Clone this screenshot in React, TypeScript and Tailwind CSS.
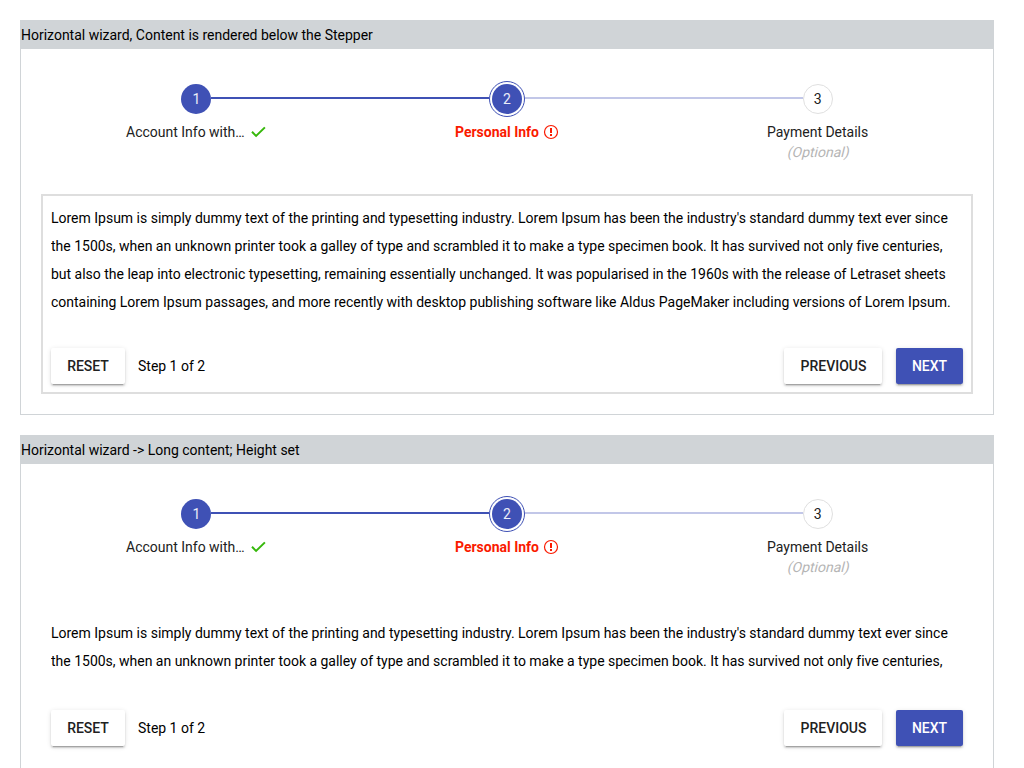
import type { ReactNode } from "react";

const LOREM = [
  "Lorem Ipsum is simply dummy text of the printing and typesetting industry. Lorem Ipsum has been the industry's standard dummy text ever since",
  "the 1500s, when an unknown printer took a galley of type and scrambled it to make a type specimen book. It has survived not only five centuries,",
  "but also the leap into electronic typesetting, remaining essentially unchanged. It was popularised in the 1960s with the release of Letraset sheets",
  "containing Lorem Ipsum passages, and more recently with desktop publishing software like Aldus PageMaker including versions of Lorem Ipsum.",
];

function CheckIcon() {
  return (
    <svg className="ml-[5px] mr-px h-4 w-4 shrink-0" viewBox="0 0 16 16" fill="none" stroke="#36b80b" strokeWidth="2">
      <path d="M2 7.8 6.1 11.9 14.9 3.4" />
    </svg>
  );
}

function ErrorIcon() {
  return (
    <svg className="ml-1 h-4 w-4 shrink-0" viewBox="0 0 16 16" fill="none" stroke="#fa1a00">
      <circle cx="8" cy="8" r="6.5" strokeWidth="1.2" />
      <path d="M8 4v5M8 10v2" strokeWidth="2" />
    </svg>
  );
}

function Step({ circle, before, after, children }: { circle: ReactNode; before: string; after: string; children: ReactNode }) {
  return (
    <li className="flex flex-1 flex-col items-center">
      <div className="flex h-[36px] w-full items-center">
        <div className={`mb-[2px] h-[2px] flex-1 ${before}`} />
        {circle}
        <div className={`mb-[2px] h-[2px] flex-1 ${after}`} />
      </div>
      {children}
    </li>
  );
}

function Stepper() {
  return (
    <ol className="flex h-[113px] text-[#212121]">
      <Step
        before="bg-transparent"
        after="bg-[#3f51b5]"
        circle={<span className="flex size-[30px] items-center justify-center rounded-full bg-[#3f51b5] text-white/90">1</span>}
      >
        <div className="mt-[5px] flex h-5 items-center leading-5">
          <span>Account Info with…</span>
          <CheckIcon />
        </div>
      </Step>
      <Step
        before="bg-[#3f51b5]"
        after="bg-[#c2c7e8]"
        circle={
          <span className="flex size-[36px] items-center justify-center rounded-full border border-[#3f51b5]">
            <span className="flex size-[30px] items-center justify-center rounded-full bg-[#3f51b5] text-white/90">2</span>
          </span>
        }
      >
        <div className="mt-[5px] flex h-5 items-center font-bold leading-5 text-[#fa1a00]">
          <span>Personal Info</span>
          <ErrorIcon />
        </div>
      </Step>
      <Step
        before="bg-[#c2c7e8]"
        after="bg-transparent"
        circle={<span className="flex size-[30px] items-center justify-center rounded-full border border-[#e0e0e0]">3</span>}
      >
        <div className="mt-[5px] leading-5">Payment Details</div>
        <div className="ml-0.5 -skew-x-[14deg] leading-5 text-[#b5b5b5]">(Optional)</div>
      </Step>
    </ol>
  );
}

function Button({ primary, className, children }: { primary?: boolean; className: string; children: ReactNode }) {
  return (
    <button
      className={`h-9 rounded-[2px] text-center font-medium shadow-[0_3px_1px_-2px_rgba(0,0,0,0.2),0_2px_2px_0_rgba(0,0,0,0.14),0_1px_5px_0_rgba(0,0,0,0.12)] ${primary ? "bg-[#3f51b5] text-white" : "bg-white text-[#212121]"} ${className}`}
    >
      {children}
    </button>
  );
}

function Wizard({ title, lines, framed }: { title: string; lines: string[]; framed?: boolean }) {
  return (
    <section className="shrink-0 border border-[#d0d4d7]">
      <h2 className="h-7 bg-[#d0d4d7] leading-7">{title}</h2>
      <div className="px-5 pb-5 pt-8">
        <Stepper />
        <div className={`border-2 p-2 ${framed ? "border-[#dedede]" : "border-transparent"}`}>
          <div className={`overflow-hidden whitespace-nowrap leading-7 ${framed ? "mb-8" : "mb-[35px]"}`}>
            {lines.map((line) => (
              <p key={line}>{line}</p>
            ))}
          </div>
          <div className="flex items-center">
            <Button className="w-[74px]">RESET</Button>
            <span className="ml-[13px]">Step 1 of 2</span>
            <Button className="ml-auto w-[98px] pl-px">PREVIOUS</Button>
            <Button primary className="ml-3.5 w-[67px]">
              NEXT
            </Button>
          </div>
        </div>
      </div>
    </section>
  );
}

export default function App() {
  return (
    <main className="flex h-screen flex-col gap-5 overflow-hidden bg-white pb-0 pl-5 pr-[30px] pt-5 font-['Roboto',sans-serif] text-[14px] tracking-[-0.007px] text-black">
      <Wizard framed title="Horizontal wizard, Content is rendered below the Stepper" lines={LOREM} />
      <Wizard title="Horizontal wizard -> Long content; Height set" lines={LOREM.slice(0, 2)} />
    </main>
  );
}
